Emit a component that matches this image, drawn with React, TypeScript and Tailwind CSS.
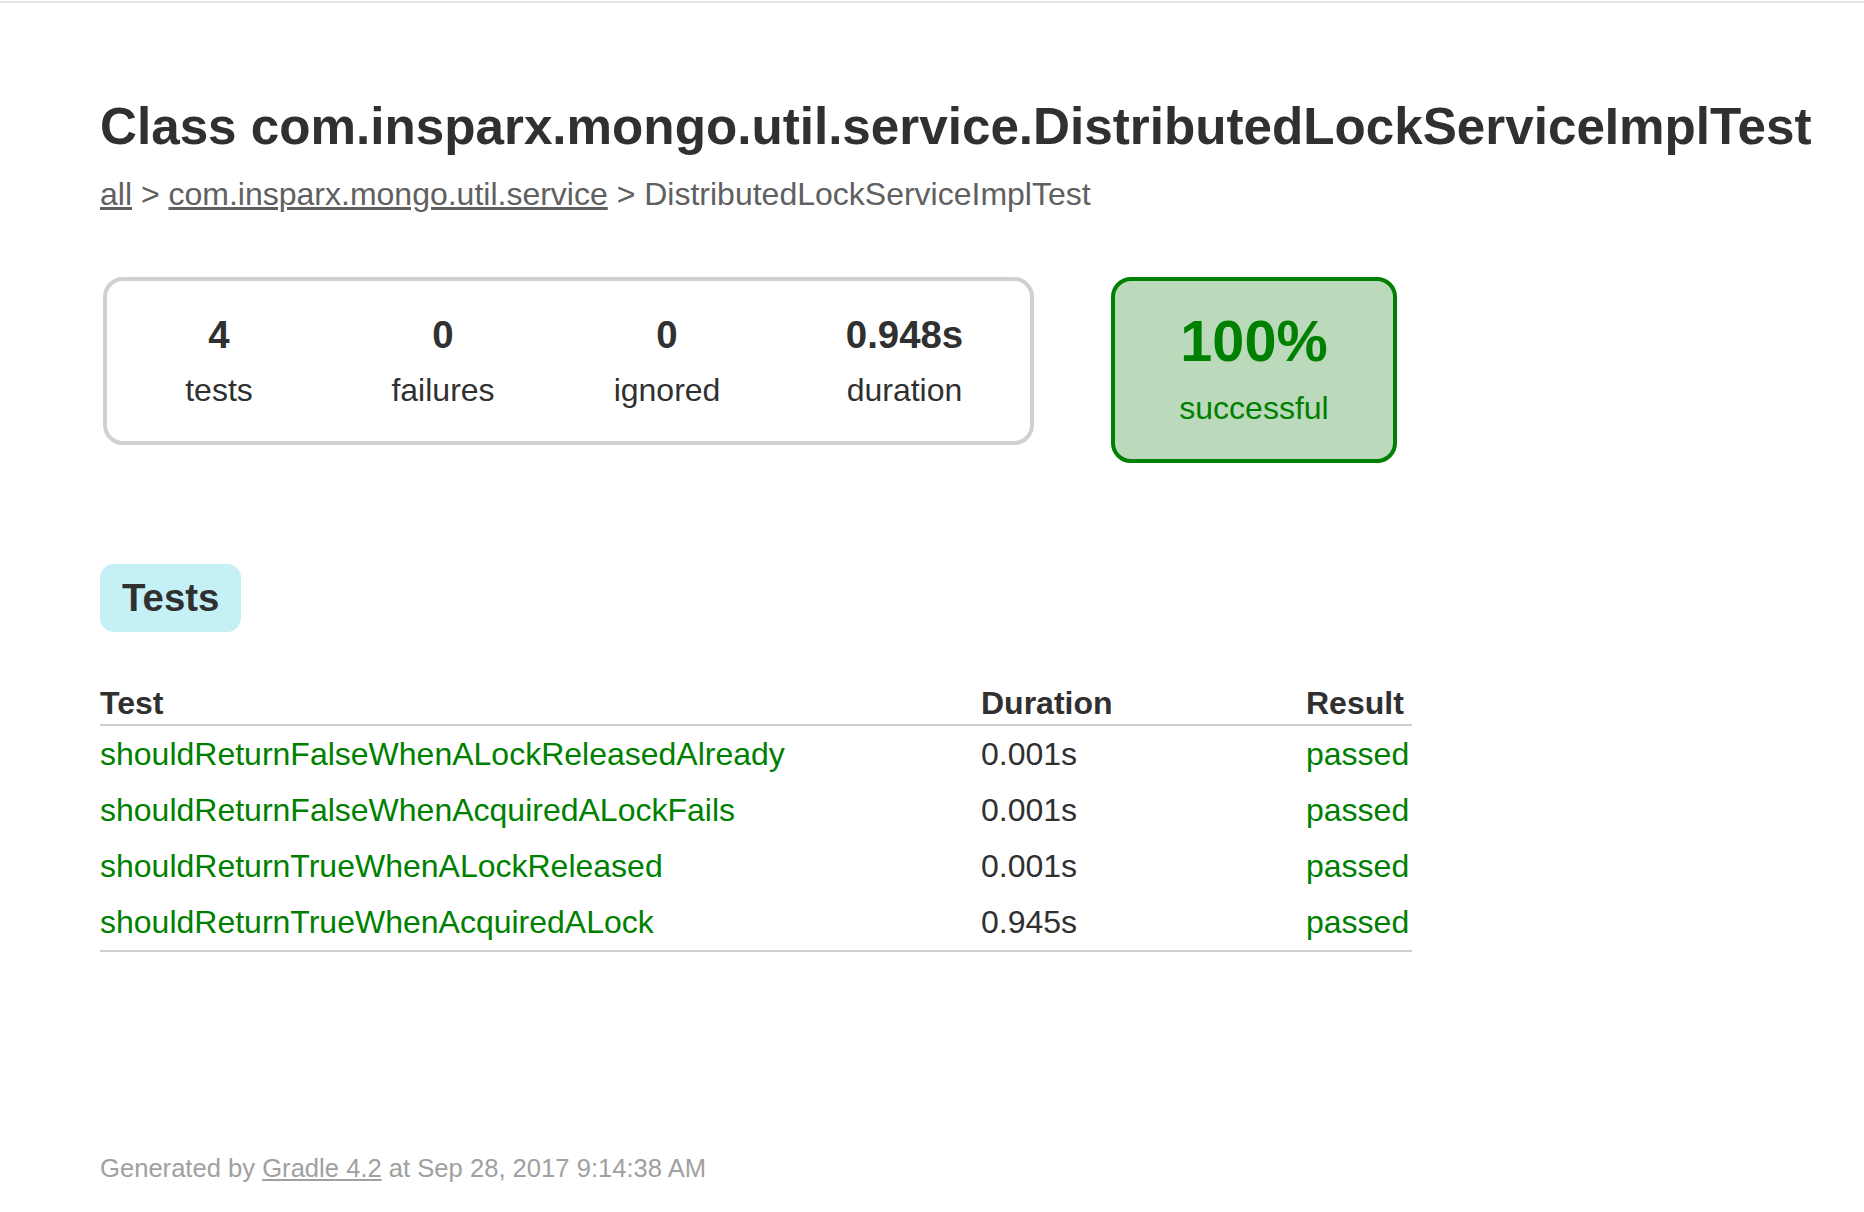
const tests = [
  { name: 'shouldReturnFalseWhenALockReleasedAlready', duration: '0.001s' },
  { name: 'shouldReturnFalseWhenAcquiredALockFails', duration: '0.001s' },
  { name: 'shouldReturnTrueWhenALockReleased', duration: '0.001s' },
  { name: 'shouldReturnTrueWhenAcquiredALock', duration: '0.945s' },
];

const counters = [
  { value: '4', label: 'tests', width: 'w-[224px]' },
  { value: '0', label: 'failures', width: 'w-[224px]' },
  { value: '0', label: 'ignored', width: 'w-[224px]' },
  { value: '0.948s', label: 'duration', width: 'w-[251px]' },
];

export default function App() {
  return (
    <div className="min-h-screen bg-white text-[#303030] font-['Liberation_Sans',Arial,sans-serif]">
      <div className="h-[3px] border-b-2 border-[#e4e4e4]" />
      <div className="px-[100px] pt-[94px]">
        <h1 className="text-[51.2px] leading-[59px] font-bold whitespace-nowrap">
          Class com.insparx.mongo.util.service.DistributedLockServiceImplTest
        </h1>
        <div className="mt-[20px] text-[32px] leading-[37px] text-[#606060] whitespace-nowrap">
          <a href="#" className="underline">all</a> &gt;{' '}
          <a href="#" className="underline">com.insparx.mongo.util.service</a> &gt; DistributedLockServiceImplTest
        </div>

        {/* summary */}
        <div className="mt-[64px] ml-[3px] flex items-start">
          <div className="flex rounded-[20px] border-4 border-[#d0d0d0]">
            {counters.map((c) => (
              <div key={c.label} className={`${c.width} pt-[32px] pb-[32px] text-center`}>
                <div className="mb-[15px] text-[38.4px] leading-[44px] font-bold">{c.value}</div>
                <div className="text-[32px] leading-[37px]">{c.label}</div>
              </div>
            ))}
          </div>
          <div className="ml-[77px] w-[286px] rounded-[20px] border-4 border-[#008000] bg-[#bbd9bb] pt-[29px] pb-[32px] text-center text-[#008000]">
            <div className="mb-[17px] text-[57.6px] leading-[63px] font-bold">100%</div>
            <div className="text-[32px] leading-[37px]">successful</div>
          </div>
        </div>

        {/* tabs */}
        <div className="mt-[101px] flex">
          <div className="rounded-[14px] border-2 border-[#c5f0f5] bg-[#c5f0f5] px-[20px] py-[10px] text-[38.4px] leading-[44px] font-bold">
            Tests
          </div>
        </div>

        <table className="mt-[48px] border-collapse border-b-2 border-[#d0d0d0] text-[32px] text-left">
          <thead>
            <tr className="border-b-2 border-[#d0d0d0]">
              <th className="w-[881px] p-0 pt-[5px] pb-[2px] leading-[37px] font-bold">Test</th>
              <th className="w-[325px] p-0 pt-[5px] pb-[2px] leading-[37px] font-bold">Duration</th>
              <th className="w-[106px] p-0 pt-[5px] pb-[2px] leading-[37px] font-bold">Result</th>
            </tr>
          </thead>
          <tbody>
            {tests.map((t) => (
              <tr key={t.name}>
                <td className="py-[10px] leading-[36px] whitespace-nowrap">
                  <a href="#" className="text-[#008000]">{t.name}</a>
                </td>
                <td className="py-[10px] leading-[36px] whitespace-nowrap">{t.duration}</td>
                <td className="py-[10px] leading-[36px] whitespace-nowrap text-[#008000]">passed</td>
              </tr>
            ))}
          </tbody>
        </table>

        <div className="mt-[202px] text-[25.6px] leading-[29px] text-[#a0a0a0] whitespace-nowrap">
          Generated by <a href="#" className="underline">Gradle 4.2</a> at Sep 28, 2017 9:14:38 AM
        </div>
      </div>
    </div>
  );
}
